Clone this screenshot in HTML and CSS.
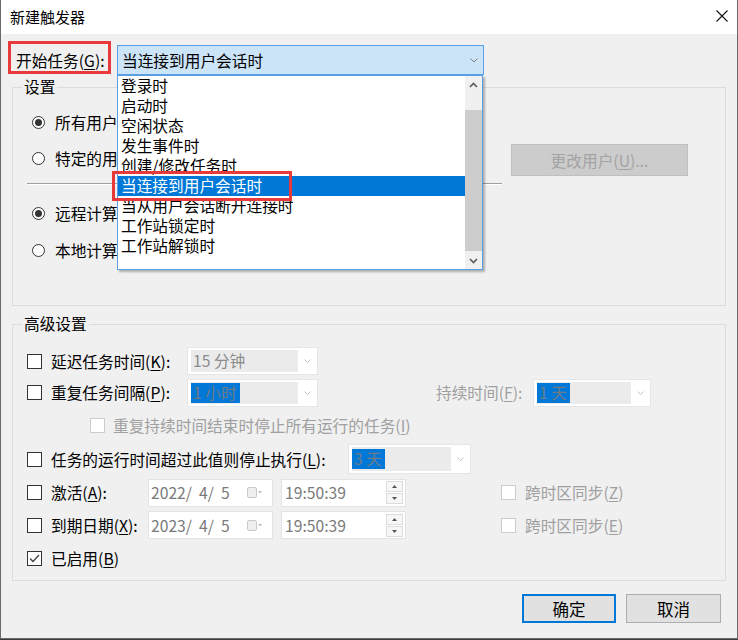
FILE: index.html
```html
<!DOCTYPE html>
<html lang="zh-CN">
<head>
<meta charset="utf-8">
<title>新建触发器</title>
<link rel="stylesheet" href="styles.css">
</head>
<body>
<div class="window">
  <div class="titlebar">
    <span class="title">新建触发器</span>
    <svg class="close" width="12" height="12" viewBox="0 0 12 12"><path d="M0.5 0.5L11.5 11.5M11.5 0.5L0.5 11.5" stroke="#111" stroke-width="1.1" fill="none"/></svg>
  </div>

  <div class="start-row">
    <span class="start-label">开始任务(<u>G</u>):</span>
    <div class="main-combo">
      <span>当连接到用户会话时</span>
      <svg class="main-chev" width="8" height="5" viewBox="0 0 8 5"><path d="M0.5 0.5L4 4L7.5 0.5" fill="none" stroke="#808080"/></svg>
      <div class="droplist">
        <div class="items">
          <div class="item">登录时</div>
          <div class="item">启动时</div>
          <div class="item">空闲状态</div>
          <div class="item">发生事件时</div>
          <div class="item">创建/修改任务时</div>
          <div class="item sel">当连接到用户会话时</div>
          <div class="item">当从用户会话断开连接时</div>
          <div class="item">工作站锁定时</div>
          <div class="item">工作站解锁时</div>
        </div>
        <div class="scrollbar">
          <div class="sb-btn"><svg width="9" height="6" viewBox="0 0 9 6"><path d="M1 5L4.5 1.5L8 5" fill="none" stroke="#5a5a5a" stroke-width="1.6"/></svg></div>
          <div class="sb-track"><div class="sb-thumb"></div></div>
          <div class="sb-btn"><svg width="9" height="6" viewBox="0 0 9 6"><path d="M1 1L4.5 4.5L8 1" fill="none" stroke="#5a5a5a" stroke-width="1.6"/></svg></div>
        </div>
      </div>
      <div class="annot annot-item"></div>
    </div>
    <div class="annot annot-start"></div>
  </div>

  <fieldset class="group settings">
    <legend>设置</legend>
    <div class="rrow">
      <span class="radio on"></span><span class="lbl">所有用户(Y)</span>
    </div>
    <div class="rrow">
      <span class="radio"></span><span class="lbl">特定的用户(S):</span>
      <span class="btn-dis">更改用户(<u>U</u>)...</span>
    </div>
    <div class="sep"></div>
    <div class="rrow">
      <span class="radio on"></span><span class="lbl">远程计算机连接(R)</span>
    </div>
    <div class="rrow tall">
      <span class="radio"></span><span class="lbl">本地计算机连接(O)</span>
    </div>
  </fieldset>

  <fieldset class="group adv">
    <legend>高级设置</legend>
    <div class="crow r1">
      <span class="cb"></span><span class="lbl w136">延迟任务时间(<u>K</u>):</span>
      <div class="dcombo w131"><span class="dfield"><span class="dtext">15 分钟</span></span><svg class="dchev" width="7" height="4" viewBox="0 0 7 4"><path d="M0.5 0.5L3.5 3.5L6.5 0.5" fill="none" stroke="#c2c2c2"/></svg></div>
    </div>
    <div class="crow r2">
      <span class="cb"></span><span class="lbl w136">重复任务间隔(<u>P</u>):</span>
      <div class="dcombo w131"><span class="dfield"><span class="dtext dsel">1 小时</span></span><svg class="dchev" width="7" height="4" viewBox="0 0 7 4"><path d="M0.5 0.5L3.5 3.5L6.5 0.5" fill="none" stroke="#c2c2c2"/></svg></div>
      <span class="lbl dis w97 ml118">持续时间(<u>F</u>):</span>
      <div class="dcombo w118"><span class="dfield"><span class="dtext dsel">1 天</span></span><svg class="dchev" width="7" height="4" viewBox="0 0 7 4"><path d="M0.5 0.5L3.5 3.5L6.5 0.5" fill="none" stroke="#c2c2c2"/></svg></div>
    </div>
    <div class="crow r3 sub">
      <span class="cb dis"></span><span class="lbl dis">重复持续时间结束时停止所有运行的任务(<u>I</u>)</span>
    </div>
    <div class="crow r4">
      <span class="cb"></span><span class="lbl w297">任务的运行时间超过此值则停止执行(<u>L</u>):</span>
      <div class="dcombo w123 h30"><span class="dfield"><span class="dtext dsel">3 天</span></span><svg class="dchev" width="7" height="4" viewBox="0 0 7 4"><path d="M0.5 0.5L3.5 3.5L6.5 0.5" fill="none" stroke="#c2c2c2"/></svg></div>
    </div>
    <div class="crow r5">
      <span class="cb"></span><span class="lbl w97">激活(<u>A</u>):</span>
      <div class="date"><span class="dval">2022/  4/  5</span><svg class="cal" width="15" height="11" viewBox="0 0 15 11"><rect x="0.5" y="0.5" width="9" height="10" rx="1.5" fill="#efefef" stroke="#cacaca"/><path d="M11 4h4l-2 2.5z" fill="#bdbdbd"/></svg></div>
      <div class="time"><span class="dval">19:50:39</span><span class="spin"><span class="spin-btn"><svg width="5" height="3" viewBox="0 0 5 3"><path d="M0 3L2.5 0L5 3z" fill="#555"/></svg></span><span class="spin-btn"><svg width="5" height="3" viewBox="0 0 5 3"><path d="M0 0L2.5 3L5 0z" fill="#555"/></svg></span></span></div>
      <span class="cb dis sync"></span><span class="lbl dis">跨时区同步(<u>Z</u>)</span>
    </div>
    <div class="crow r6">
      <span class="cb"></span><span class="lbl w97">到期日期(<u>X</u>):</span>
      <div class="date"><span class="dval">2023/  4/  5</span><svg class="cal" width="15" height="11" viewBox="0 0 15 11"><rect x="0.5" y="0.5" width="9" height="10" rx="1.5" fill="#efefef" stroke="#cacaca"/><path d="M11 4h4l-2 2.5z" fill="#bdbdbd"/></svg></div>
      <div class="time"><span class="dval">19:50:39</span><span class="spin"><span class="spin-btn"><svg width="5" height="3" viewBox="0 0 5 3"><path d="M0 3L2.5 0L5 3z" fill="#555"/></svg></span><span class="spin-btn"><svg width="5" height="3" viewBox="0 0 5 3"><path d="M0 0L2.5 3L5 0z" fill="#555"/></svg></span></span></div>
      <span class="cb dis sync"></span><span class="lbl dis">跨时区同步(<u>E</u>)</span>
    </div>
    <div class="crow r7">
      <span class="cb checked"><svg width="13" height="13" viewBox="0 0 13 13"><path d="M2 6.5L5 9.5L11 3" fill="none" stroke="#444" stroke-width="1.3"/></svg></span><span class="lbl">已启用(<u>B</u>)</span>
    </div>
  </fieldset>

  <div class="buttons">
    <span class="btn ok">确定</span>
    <span class="btn cancel">取消</span>
  </div>
</div>
</body>
</html>
```

FILE: styles.css
```css
* { box-sizing: border-box; }
html, body { margin: 0; padding: 0; }
body {
  width: 738px;
  height: 640px;
  overflow: hidden;
  background: #3c3c3c;
  font-family: "Noto Sans CJK SC", "Microsoft YaHei", sans-serif;
  font-size: 15.7px;
  color: #000;
}
u { text-decoration-thickness: 1px; text-underline-offset: 2px; }

.window {
  width: 738px;
  height: 639px;
  background: #f0f0f0;
  border: 1px solid #6a6a6a;
  border-top: none;
  display: flex;
  flex-direction: column;
}

.titlebar {
  flex: none;
  height: 34px;
  background: #fff;
  display: flex;
  align-items: flex-start;
  justify-content: space-between;
  padding-left: 9px;
}
.title { line-height: 34px; font-size: 15px; }
.close { margin-top: 10px; margin-right: 9px; }

/* start row */
.start-row {
  position: relative;
  flex: none;
  display: flex;
  align-items: center;
  height: 30px;
  margin-top: 11px;
  padding-left: 15px;
}
.start-label { width: 101px; flex: none; white-space: nowrap; }
.main-combo {
  position: relative;
  width: 367px;
  height: 30px;
  border: 1px solid #5b9fe3;
  background: #cce4f7;
  display: flex;
  align-items: center;
  justify-content: space-between;
  padding-left: 4px;
  padding-right: 5px;
  white-space: nowrap;
}
.droplist {
  position: absolute;
  left: -1px;
  top: 29px;
  width: 366px;
  height: 195px;
  border: 1px solid #5b9fe3;
  background: #fff;
  box-shadow: 2px 2px 2px rgba(0, 0, 0, 0.28);
  display: flex;
  z-index: 5;
}
.items { width: 347px; }
.item { height: 20px; line-height: 20px; padding-left: 3px; white-space: nowrap; }
.item.sel { background: #0078d7; color: #fff; }
.scrollbar {
  width: 17px;
  background: #f0f0f0;
  display: flex;
  flex-direction: column;
}
.sb-btn { height: 17px; display: flex; align-items: center; justify-content: center; flex: none; }
.sb-track { flex: 1; }
.sb-thumb { margin-top: 17px; height: 141px; background: #cdcdcd; }

.annot { position: absolute; border: 3px solid #e83a3a; z-index: 6; }
.annot-start { left: 7px; top: -4px; width: 103px; height: 33px; }
.annot-item { left: -6px; top: 125px; width: 180px; height: 30px; }

/* groups */
.group {
  flex: none;
  margin: 0 11px;
  border: 1px solid #dcdcdc;
  min-width: 0;
}
.group legend {
  margin-left: 9px;
  padding: 0 2px;
  line-height: 20px;
}
.settings { margin-top: 2px; padding: 7px 0 36px; }
.adv { margin-top: 8px; padding: 12px 0 5px; }

.rrow { display: flex; align-items: center; height: 36px; padding-left: 19px; }
.rrow.tall { height: 38px; }
.radio {
  flex: none;
  width: 13px;
  height: 13px;
  border-radius: 50%;
  border: 1px solid #333;
  background: #fff;
  margin-right: 10px;
  display: flex;
  align-items: center;
  justify-content: center;
}
.radio.on::after {
  content: "";
  width: 7px;
  height: 7px;
  border-radius: 50%;
  background: #333;
}
.lbl { flex: none; white-space: nowrap; }
.lbl.dis { color: #a0a0a0; }
.btn-dis {
  align-self: flex-end;
  margin-left: auto;
  margin-right: 37px;
  width: 177px;
  height: 32px;
  background: #cccccc;
  border: 1px solid #bfbfbf;
  color: #a3a3a3;
  display: flex;
  align-items: center;
  justify-content: center;
}
.sep {
  margin: 7px 0 10px 14px;
  width: 475px;
  height: 2px;
  border-top: 1px solid #a0a0a0;
  border-bottom: 1px solid #fff;
}

.crow { display: flex; align-items: center; padding-left: 14px; }
.r1 { height: 30px; }
.r2 { height: 33px; }
.r3 { height: 33px; }
.r4 { height: 34px; }
.r5 { height: 33px; }
.r6 { height: 32px; }
.r7 { height: 34px; }
.crow.sub { padding-left: 77px; }
.cb {
  flex: none;
  width: 15px;
  height: 15px;
  border: 1px solid #333;
  background: #fff;
  margin-right: 9px;
  display: flex;
  align-items: center;
  justify-content: center;
}
.cb.dis { border-color: #cccccc; }
.crow.sub .cb { margin-right: 8px; }
.cb.sync { margin-left: 95px; }

.w97 { width: 97px; }
.w136 { width: 136px; }
.w297 { width: 297px; }
.ml118 { margin-left: 118px; }

.dcombo {
  flex: none;
  display: flex;
  align-items: stretch;
  height: 28px;
  border: 1px solid #e6e6e6;
  background: #fff;
  padding: 2px 0 2px 3px;
}
.dcombo.w131 { width: 131px; }
.dcombo.w118 { width: 118px; }
.dcombo.w123 { width: 123px; }
.dcombo.h30 { height: 30px; }
.dfield {
  flex: 1;
  background: #ebebeb;
  display: flex;
  align-items: center;
  white-space: nowrap;
}
.dtext { color: #8c8c8c; padding: 0 3px 0 2px; line-height: 20px; }
.dtext.dsel { background: #0078d7; color: #6f7b88; }
.dchev { flex: none; height: 4px; align-self: center; padding: 0 6px; box-sizing: content-box; width: 7px; }

.date, .time {
  flex: none;
  width: 125px;
  height: 28px;
  border: 1px solid #e3e3e3;
  background: #fff;
  display: flex;
  align-items: center;
  color: #7a7a7a;
}
.date { padding: 0 10px 0 2px; }
.time { margin-left: 8px; padding: 0 2px 0 3px; }
.dval { white-space: pre; }
.cal { margin-left: auto; }
.spin { margin-left: auto; display: flex; flex-direction: column; gap: 1px; }
.spin-btn {
  width: 17px;
  height: 11px;
  border: 1px solid #dcdcdc;
  background: #f7f7f7;
  display: flex;
  align-items: center;
  justify-content: center;
}

.buttons {
  flex: none;
  display: flex;
  justify-content: flex-end;
  gap: 10px;
  margin-top: 13px;
  padding-right: 16px;
}
.btn {
  height: 29px;
  background: #e1e1e1;
  border: 1px solid #adadad;
  display: flex;
  align-items: center;
  justify-content: center;
  font-size: 16.5px;
}
.btn.ok { width: 94px; border: 2px solid #0078d7; }
.btn.cancel { width: 95px; }
```
